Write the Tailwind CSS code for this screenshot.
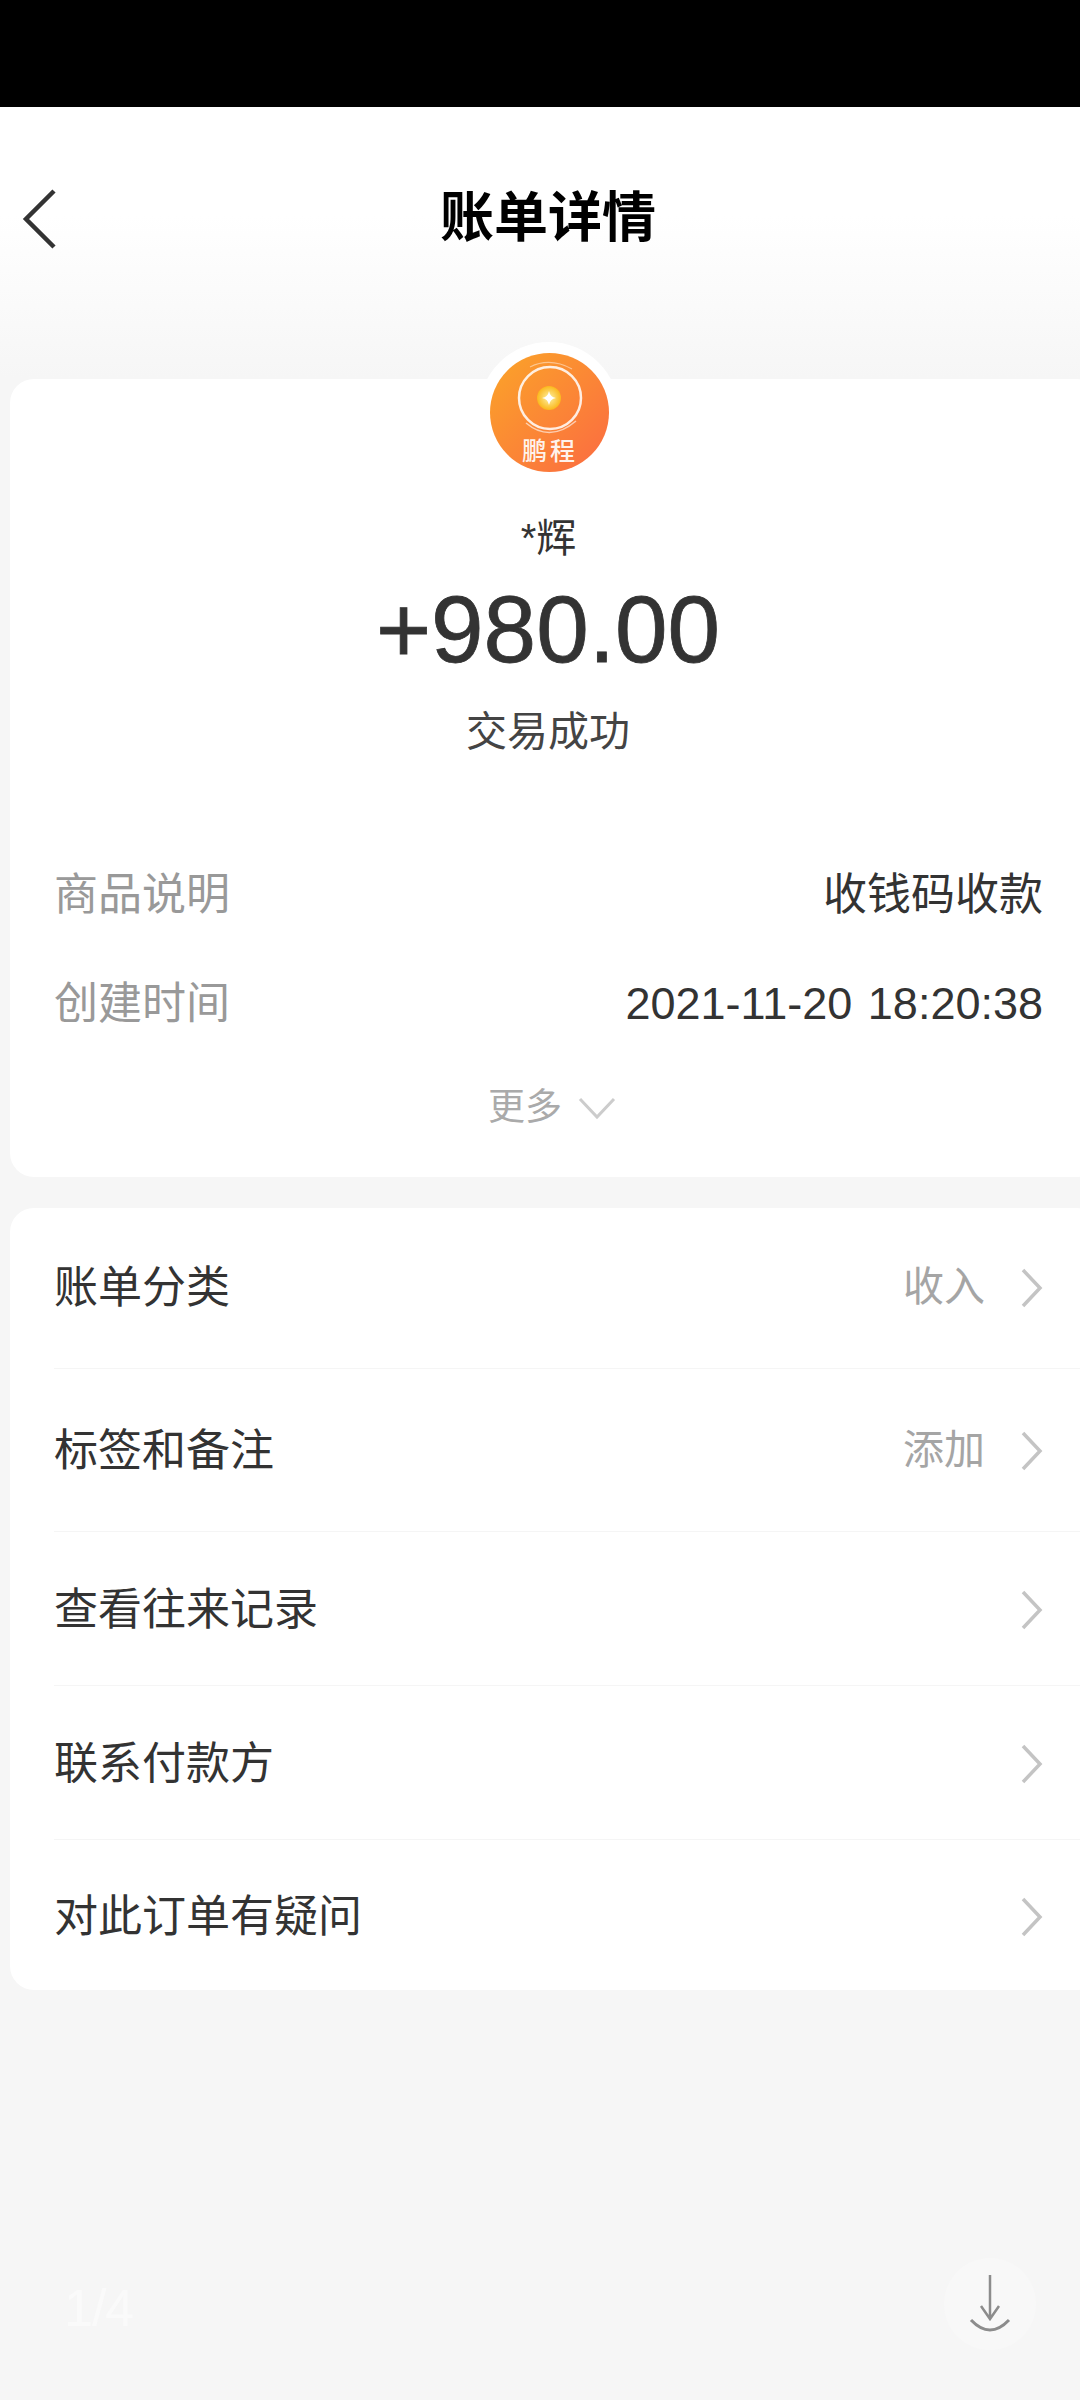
<!DOCTYPE html>
<html lang="zh-CN">
  <head>
    <meta charset="UTF-8" />
    <meta name="viewport" content="width=device-width, initial-scale=1.0" />
    <title>账单详情</title>
    <script src="https://cdn.jsdelivr.net/npm/@tailwindcss/browser@4"></script>
  </head>

  <body class="bg-[#f6f6f6] font-['Liberation_Sans','Noto_Sans_CJK_SC',sans-serif]">
    <div class="w-[1080px] h-[2400px] overflow-hidden flex flex-col">
      <div class="h-[107px] bg-black"></div>

      <!-- header + gradient -->
      <div class="h-[272px] bg-gradient-to-b from-white from-40% to-[#f6f6f6] relative">
        <div class="h-[222px] pl-[16px] flex items-center justify-center">
          <h1 class="text-[54px] leading-none font-bold text-black">账单详情</h1>
        </div>
        <svg class="absolute left-[21px] top-[82px]" width="36" height="60" viewBox="0 0 36 60" fill="none">
          <path d="M33 2 L5 30 L33 58" stroke="#333" stroke-width="4.5" />
        </svg>
      </div>

      <!-- summary card -->
      <div class="relative ml-[10px] w-[1090px] h-[798px] bg-white rounded-[24px] flex flex-col">
        <div class="-mt-[37px] ml-[469px] w-[140px] h-[140px] rounded-full bg-white flex items-center justify-center">
          <svg width="119" height="119" viewBox="0 0 119 119">
            <defs>
              <linearGradient id="logoBg" x1="0" y1="0" x2="1" y2="1">
                <stop offset="0" stop-color="#fba528" />
                <stop offset="1" stop-color="#fb6a42" />
              </linearGradient>
              <radialGradient id="coin">
                <stop offset="0.2" stop-color="#fde68a" />
                <stop offset="1" stop-color="#fbb81c" />
              </radialGradient>
            </defs>
            <circle cx="59.5" cy="59.5" r="59.5" fill="url(#logoBg)" />
            <circle cx="60" cy="45" r="31" fill="none" stroke="#fff" stroke-opacity="0.85" stroke-width="2.5" />
            <path d="M36 70 Q60 90 86 68" fill="none" stroke="#fff" stroke-opacity="0.6" stroke-width="1.5" />
            <path d="M40 14 Q60 4 82 16" fill="none" stroke="#fff" stroke-opacity="0.45" stroke-width="1.2" />
            <circle cx="59" cy="45" r="12" fill="url(#coin)" />
            <path d="M59 38 Q60 44 66 45 Q60 46 59 52 Q58 46 52 45 Q58 44 59 38Z" fill="#fff" />
            <text x="60" y="107" text-anchor="middle" font-size="25" font-weight="500" letter-spacing="3" fill="#fff" fill-opacity="0.92" font-family="'Noto Sans CJK SC', sans-serif">鹏程</text>
          </svg>
        </div>

        <div class="w-[1076px] flex flex-col items-center">
          <p class="mt-[26px] text-[40px] leading-[60px] text-[#333] w-[1076px] text-center pl-[1px]">*辉</p>
          <p class="mt-[6px] text-[94.5px] leading-[110px] text-[#333] [-webkit-text-stroke:0.8px_#333]">+980.00</p>
          <p class="mt-[18px] text-[41px] leading-[60px] text-[#444]">交易成功</p>
        </div>

        <div class="w-[1033px] mt-[103px] pl-[44px] flex flex-col gap-[49px]">
          <div class="flex justify-between items-center h-[60px]">
            <span class="text-[44px] text-[#999]">商品说明</span>
            <span class="text-[44px] text-[#333]">收钱码收款</span>
          </div>
          <div class="flex justify-between items-center h-[60px]">
            <span class="text-[44px] text-[#999]">创建时间</span>
            <span class="text-[45px] text-[#333] [word-spacing:3px]">2021-11-20 18:20:38</span>
          </div>
        </div>

        <div class="w-[1076px] mt-[44px] pl-[8px] flex items-center justify-center gap-[16px]">
          <span class="text-[37px] leading-[60px] text-[#aaa]">更多</span>
          <svg width="38" height="24" viewBox="0 0 38 24" fill="none">
            <path d="M2 3 L19 21 L36 3" stroke="#ccc" stroke-width="3" />
          </svg>
        </div>
      </div>

      <!-- action list -->
      <div class="ml-[10px] mt-[31px] w-[1090px] h-[782px] bg-white rounded-[24px] pl-[44px] flex flex-col">
        <div class="h-[161px] pr-[57px] flex items-center justify-between border-b border-[#f5f5f5]">
          <span class="text-[44px] text-[#333]">账单分类</span>
          <div class="flex items-center gap-[36px]">
            <span class="text-[41px] text-[#a5a5a5]">收入</span>
            <svg width="22" height="40" viewBox="0 0 22 40" fill="none"><path d="M2 2 L19 20 L2 38" stroke="#c4c4c4" stroke-width="3.5" /></svg>
          </div>
        </div>
        <div class="h-[163px] pr-[57px] pt-[2px] flex items-center justify-between border-b border-[#f5f5f5]">
          <span class="text-[44px] text-[#333]">标签和备注</span>
          <div class="flex items-center gap-[36px]">
            <span class="text-[41px] text-[#a5a5a5]">添加</span>
            <svg width="22" height="40" viewBox="0 0 22 40" fill="none"><path d="M2 2 L19 20 L2 38" stroke="#c4c4c4" stroke-width="3.5" /></svg>
          </div>
        </div>
        <div class="h-[154px] pr-[57px] pt-[3px] flex items-center justify-between border-b border-[#f5f5f5]">
          <span class="text-[44px] text-[#333]">查看往来记录</span>
          <svg width="22" height="40" viewBox="0 0 22 40" fill="none"><path d="M2 2 L19 20 L2 38" stroke="#c4c4c4" stroke-width="3.5" /></svg>
        </div>
        <div class="h-[154px] pr-[57px] pt-[2px] flex items-center justify-between border-b border-[#f5f5f5]">
          <span class="text-[44px] text-[#333]">联系付款方</span>
          <svg width="22" height="40" viewBox="0 0 22 40" fill="none"><path d="M2 2 L19 20 L2 38" stroke="#c4c4c4" stroke-width="3.5" /></svg>
        </div>
        <div class="h-[150px] pr-[57px] pt-[3px] flex items-center justify-between">
          <span class="text-[44px] text-[#333]">对此订单有疑问</span>
          <svg width="22" height="40" viewBox="0 0 22 40" fill="none"><path d="M2 2 L19 20 L2 38" stroke="#c4c4c4" stroke-width="3.5" /></svg>
        </div>
      </div>

      <!-- pager + save -->
      <div class="mt-[268px] pl-[64px] pr-[44px] flex items-center justify-between">
        <span class="mt-[8px] text-[52px] leading-none text-[#fafafa] tracking-[-1px]">1/4</span>
        <div class="w-[92px] h-[92px] rounded-full bg-[#f8f8f8] flex items-center justify-center">
          <svg width="44" height="60" viewBox="0 0 44 60" fill="none">
            <path d="M22 1 V44 M13 32 L22 45 L31 32" stroke="#8c8c8c" stroke-width="2.5" />
            <path d="M3 46 Q22 66 41 46" stroke="#8c8c8c" stroke-width="3" />
          </svg>
        </div>
      </div>
    </div>
  </body>
</html>
